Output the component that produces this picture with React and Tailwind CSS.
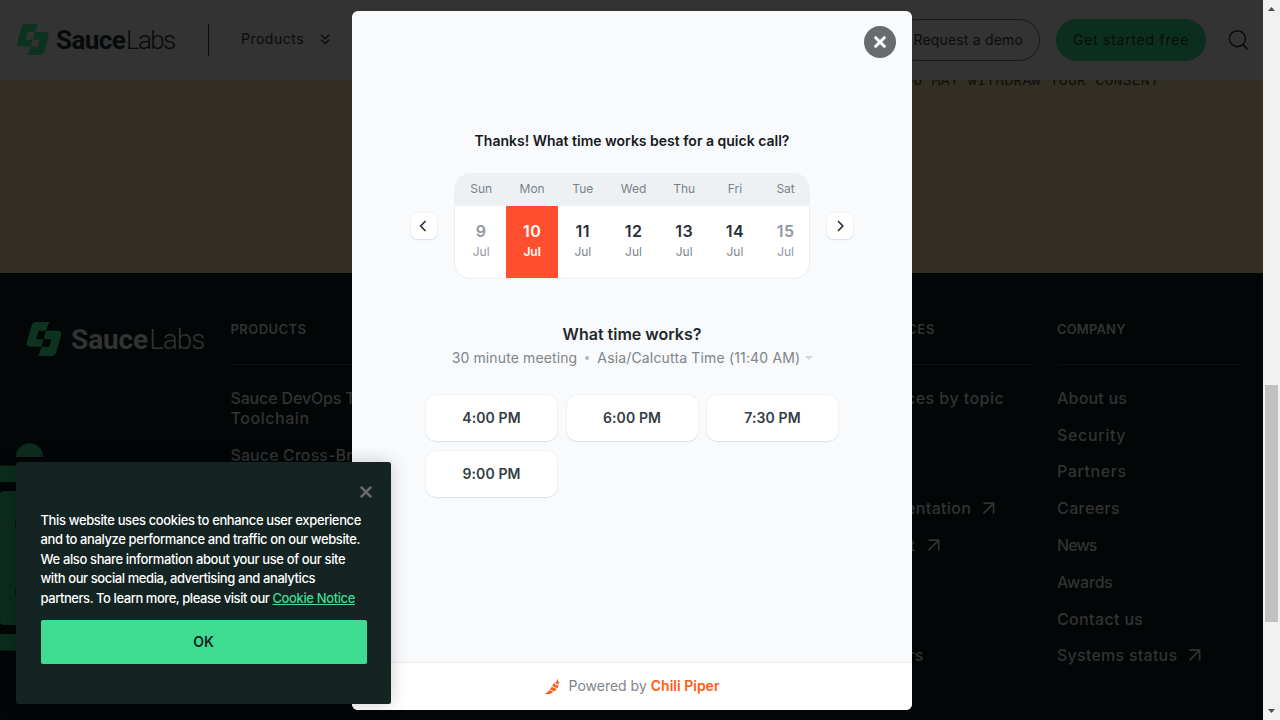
import React from 'react';

function Mark({ className }) {
  return (
    <svg viewBox="0 0 32 31" className={className} fill="#0b3320">
      <path d="M8.4 0H21L17.6 8H12.2Q11 8 10.6 9.2L9 15.8H15.4L14 22.6H3.2Q-.4 22.4.3 19L4.6 3Q5.4.2 8.4 0Z" />
      <path d="M17.6 8H28.8Q32.4 8.3 31.7 11.6L27.2 28Q26.3 30.7 23.4 31H10.7L14 22.6H19.6Q21 22.6 21.3 21.4L22.6 15.8H15.8Z" />
    </svg>
  );
}

function Arrow() {
  return (
    <svg viewBox="0 0 12 12" className="ml-3 h-3 w-3 shrink-0" fill="none" stroke="#333" strokeWidth="1.7">
      <path d="M.5 1.2H10.6V11.5M10.4 1.4L.5 11.4" />
    </svg>
  );
}

function Row({ children, arrow, track = 'tracking-[0.45px]', pos = '' }) {
  return (
    <li className={`flex h-[36.8px] items-center whitespace-nowrap ${pos}`}>
      <span className={track}>{children}</span>
      {arrow && <Arrow />}
    </li>
  );
}

function Column({ title, titleTrack, children }) {
  return (
    <div className="w-[184px] shrink-0">
      <h3 className={`h-5 text-[13px] font-semibold leading-5 ${titleTrack}`}>{title}</h3>
      <div className="mt-[24.5px] h-px bg-[#0b0f10]" />
      <ul className="mt-[15px] text-base font-medium leading-5">{children}</ul>
    </div>
  );
}

function Header() {
  return (
    <header className="flex h-20 shrink-0 items-center bg-[#333333] pb-px pl-[17px] pr-[15px] text-[#090c0c]">
      <Mark className="h-[31px] w-8 shrink-0" />
      <div className="ml-[7px] flex w-[120px] items-baseline font-['Roboto',sans-serif] text-[26px] leading-8 text-[#070a0a]">
        <span className="font-bold tracking-[-0.6px]">Sauce</span>
        <span className="ml-px font-light tracking-[-1.7px]">Labs</span>
      </div>
      <div className="ml-8 h-8 w-px bg-[#0a0c0c]" />
      <span className="-mt-px ml-8 text-sm tracking-[0.5px]">Products</span>
      <svg viewBox="0 0 10 11" className="-mt-px ml-4 h-[11px] w-2.5" fill="none" stroke="#090c0c" strokeWidth="1.3">
        <path d="M1 1L5 4.8L9 1M1 5.8L5 9.6L9 5.8" />
      </svg>
      <div className="ml-auto flex items-center pt-px">
        <div className="flex h-[42px] items-center rounded-full border border-[#1a1c1c] px-4 text-sm tracking-[0.18px]">Request a demo</div>
        <div className="ml-4 flex h-[42px] w-[150px] items-center justify-center whitespace-nowrap rounded-full bg-[#0c2e1e] text-sm tracking-[0.75px]">Get started free</div>
        <svg viewBox="0 0 20 20" className="ml-[22px] h-5 w-5" fill="none" stroke="#070909" strokeWidth="1.4">
          <circle cx="9.4" cy="8.7" r="8" />
          <path d="M15 14.5L19.6 19.3" />
        </svg>
      </div>
    </header>
  );
}

function Footer() {
  return (
    <footer className="relative flex flex-1 overflow-hidden bg-[#020606] pl-[26px] pt-[46px] text-[#333333]">
      <svg className="absolute left-0 top-[170px] h-[220px] w-[60px]" viewBox="0 0 60 220" fill="#0c2c1d">
        <path d="M15.8 14A13.7 13.7 0 0 1 43.2 14Z" />
        <path d="M0 22.5H60V39H3L0 39.4ZM0 191H60V207.5H0ZM3 48H60V182H3L0 180V49.5Z" />
        <path d="M16.5 71Q14.5 80 16.5 90ZM16.5 140Q14.5 148 16.5 158Z" fill="#020606" />
      </svg>
      <div className="mt-[2.5px] flex h-[34px] w-[204.5px] shrink-0 items-center">
        <Mark className="h-[34px] w-9 shrink-0" />
        <div className="ml-[9px] mt-[2px] flex items-baseline font-['Roboto',sans-serif] text-[28px] leading-8">
          <span className="font-bold tracking-[-0.1px]">Sauce</span>
          <span className="ml-px font-light tracking-[-1.1px]">Labs</span>
        </div>
      </div>
      <div className="flex">
        <Column title="PRODUCTS" titleTrack="tracking-[0.45px]">
          <li className="mb-[9px] pt-2">
            <span className="block tracking-[-0.15px]">Sauce DevOps Test</span>
            <span className="block tracking-[0.55px]">Toolchain</span>
          </li>
          <Row track="tracking-[0.1px]">Sauce Cross-Browser</Row>
        </Column>
        <div className="w-[435.5px] shrink-0" />
        <Column title="RESOURCES" titleTrack="tracking-[0.7px]">
          <Row>Resources by topic</Row>
          <Row pos="mt-[73.6px]" track="tracking-[0.35px]" arrow>Documentation</Row>
          <Row arrow track="tracking-[0.6px]">Support</Row>
          <Row pos="mt-[73.6px]" track="tracking-[0.2px]">Webinars</Row>
        </Column>
        <div className="w-[23px] shrink-0" />
        <Column title="COMPANY" titleTrack="tracking-[0.15px]">
          <Row track="tracking-[0.2px]">About us</Row>
          <Row track="tracking-[0.65px]">Security</Row>
          <Row track="tracking-[0.6px]">Partners</Row>
          <Row track="tracking-[0.4px]">Careers</Row>
          <Row track="tracking-[-0.9px]">News</Row>
          <Row track="tracking-[-0.2px]">Awards</Row>
          <Row track="tracking-[0.35px]">Contact us</Row>
          <Row track="tracking-[0.25px]" arrow>Systems status</Row>
        </Column>
      </div>
    </footer>
  );
}

const days = [
  ['Sun', 9], ['Mon', 10], ['Tue', 11], ['Wed', 12], ['Thu', 13], ['Fri', 14], ['Sat', 15],
];

function NavButton({ d }) {
  return (
    <button className="flex h-[26px] w-[26px] items-center justify-center rounded-md bg-white shadow-[0_1px_1px_#d9e3ea,0_0_2px_#dfe6eb]">
      <svg viewBox="0 0 12 12" className="h-3 w-3" fill="none" stroke="#2b353b" strokeWidth="1.7">
        <path d={d} />
      </svg>
    </button>
  );
}

function Calendar() {
  return (
    <div className="mt-[22px] flex items-center justify-center gap-[17px]">
      <NavButton d="M7.5 1L2.7 6L7.5 11" />
      <div className="flex h-[106px] w-[356px] overflow-hidden rounded-2xl border border-[#eaeff3] bg-white">
        {days.map(([name, n]) => {
          const on = n === 10;
          const off = n === 9 || n === 15;
          return (
            <div key={name} className={`flex shrink-0 flex-col text-center ${n === 9 ? 'w-[51.3px]' : 'w-[50.7px]'}`}>
              <div className="h-8 bg-[#edf1f4] pl-px text-xs leading-[29px] text-[#7b8288]">{name}</div>
              <div className={`flex-1 pl-px pt-[15px] ${on ? '-mr-px bg-[#ff4f2e] pr-px font-semibold text-white' : ''}`}>
                <div className={`text-base font-semibold leading-5 tracking-[0.5px] ${on ? 'text-white' : off ? 'text-[#9297a3]' : 'text-[#252f3a]'}`}>{n}</div>
                <div className={`mt-[1px] text-xs leading-5 ${on ? 'text-white' : off ? 'text-[#92979f]' : 'text-[#7d848a]'}`}>Jul</div>
              </div>
            </div>
          );
        })}
      </div>
      <NavButton d="M4 1L8.8 6L4 11" />
    </div>
  );
}

function Scheduler() {
  return (
    <section className="absolute left-[352px] top-[10.5px] flex h-[699.5px] w-[560px] flex-col overflow-hidden rounded-md bg-[#f8fafc]">
      <div className="flex justify-end pr-4 pt-[15.5px]">
        <button className="flex h-8 w-8 items-center justify-center rounded-full bg-[#676c70]">
          <svg viewBox="0 0 12 12" className="h-3 w-3" stroke="#fff" strokeWidth="3" strokeLinecap="round">
            <path d="M1.7 1.7L10.3 10.3M10.3 1.7L1.7 10.3" />
          </svg>
        </button>
      </div>
      <h2 className="mt-[72.5px] text-center text-sm font-semibold leading-5 text-[#16191c]">Thanks! What time works best for a quick call?</h2>
      <Calendar />
      <h3 className="mt-[43px] text-center text-base font-semibold leading-6 text-[#22282c]">What time works?</h3>
      <div className="mt-[2px] flex items-center justify-center pl-px text-sm leading-5 text-[#7f8589]">
        <span className="tracking-[0.12px]">30 minute meeting</span>
        <span className="mx-2 h-1 w-1 rounded-full bg-[#b3b8bc]" />
        <span className="tracking-[0.16px]">Asia/Calcutta Time (11:40 AM)</span>
        <svg viewBox="0 0 8 4" className="ml-[5px] h-1 w-2" fill="#d3d7da"><path d="M0 0H8L4 4Z" /></svg>
      </div>
      <div className="mx-auto mt-[27px] grid w-[412px] grid-cols-3 gap-x-[9.5px] gap-y-2.5">
        {['4:00 PM', '6:00 PM', '7:30 PM', '9:00 PM'].map((t) => (
          <button key={t} className="h-[46px] rounded-[10px] bg-white text-sm font-semibold tracking-[0.1px] text-[#333d44] shadow-[0_1px_1px_#dbe4ea,0_0_2px_#e4eaee]">{t}</button>
        ))}
      </div>
      <div className="mt-auto flex h-12 shrink-0 items-center justify-center border-t border-[#eceef0] bg-white pb-px text-sm leading-5">
        <svg viewBox="0 0 15 17" className="mr-[9px] h-[17px] w-[15px]" fill="#ff5a1f">
          <path d="M12.3.5L13.1 3.3L14 4.1L13.7 6.5L10.8 5.3L10.2 4.2L11.6 3.4Z" />
          <path d="M9.5 4.8L10.2 6.7L13.6 7.6Q13.3 9.3 12.3 10.3L7.2 8.1Q7.8 6 9.5 4.8Z" />
          <path d="M6.5 8.8L11.7 11Q10.8 12.4 9.3 13.4L5 11.5Q6 10.3 6.5 8.8Z" />
          <path d="M4.3 12.1L8.5 13.9Q5 16.7.5 16.2L.7 15.2Q2.9 14.4 4.3 12.1Z" />
        </svg>
        <span className="text-[#7e8488]">Powered by</span>
        <span className="ml-1 font-semibold text-[#ff5c14]">Chili Piper</span>
      </div>
    </section>
  );
}

function CookieNotice() {
  return (
    <aside className="absolute left-4 top-[461.5px] h-[242.5px] w-[375px] rounded-[2.5px] bg-[#142422] px-[24.5px] pt-6 shadow-[0_0_18px_rgba(0,0,0,0.2)]">
      <svg viewBox="0 0 12 12" className="ml-auto mr-[-5.5px] h-3 w-3" stroke="#6b6b6b" strokeWidth="2.6">
        <path d="M.8.8L11.2 11.2M11.2.8L.8 11.2" />
      </svg>
      <p className="mt-[13.4px] whitespace-nowrap text-[13px] font-medium leading-[19.5px] tracking-[-0.37px] text-white">
        This website uses cookies to enhance user experience<br />
        <span className="tracking-[-0.39px]">and to analyze performance and traffic on our website.</span><br />
        We also share information about your use of our site<br />
        <span className="tracking-[-0.41px]">with our social media, advertising and analytics</span><br />
        <span className="tracking-[-0.44px]">partners. To learn more, please visit our </span>
        <a className="text-[#3ddc91] underline">Cookie Notice</a>
      </p>
      <button className="mt-[11.6px] h-11 w-[326px] rounded-[2px] bg-[#3ddc91] text-sm font-semibold text-[#142422]">OK</button>
    </aside>
  );
}

function Scrollbar() {
  return (
    <div className="flex w-[17px] shrink-0 flex-col items-center bg-[#f1f1f1]">
      <svg viewBox="0 0 7 4" className="mt-[7px] h-1 w-[7px]" fill="#505050"><path d="M0 4L3.5 0L7 4Z" /></svg>
      <div className="mt-[374px] h-[237px] w-[13px] bg-[#c1c1c1]" />
      <svg viewBox="0 0 7 4" className="mb-[7px] mt-auto h-1 w-[7px]" fill="#505050"><path d="M0 0L3.5 4L7 0Z" /></svg>
    </div>
  );
}

export default function App() {
  return (
    <div className="relative flex h-[720px] w-[1280px] overflow-hidden bg-[#020606] font-['Inter',sans-serif]">
      <div className="flex w-[1263px] flex-col">
        <Header />
        <div className="h-[193px] shrink-0 overflow-hidden bg-[#332e24]">
          <p className="-mt-[8px] pr-[104px] text-right font-['Liberation_Mono',monospace] text-[15px] leading-5 tracking-[0.1px] text-[#0d0e0c]">YOU MAY WITHDRAW YOUR CONSENT</p>
        </div>
        <Footer />
      </div>
      <Scrollbar />
      <Scheduler />
      <CookieNotice />
    </div>
  );
}
